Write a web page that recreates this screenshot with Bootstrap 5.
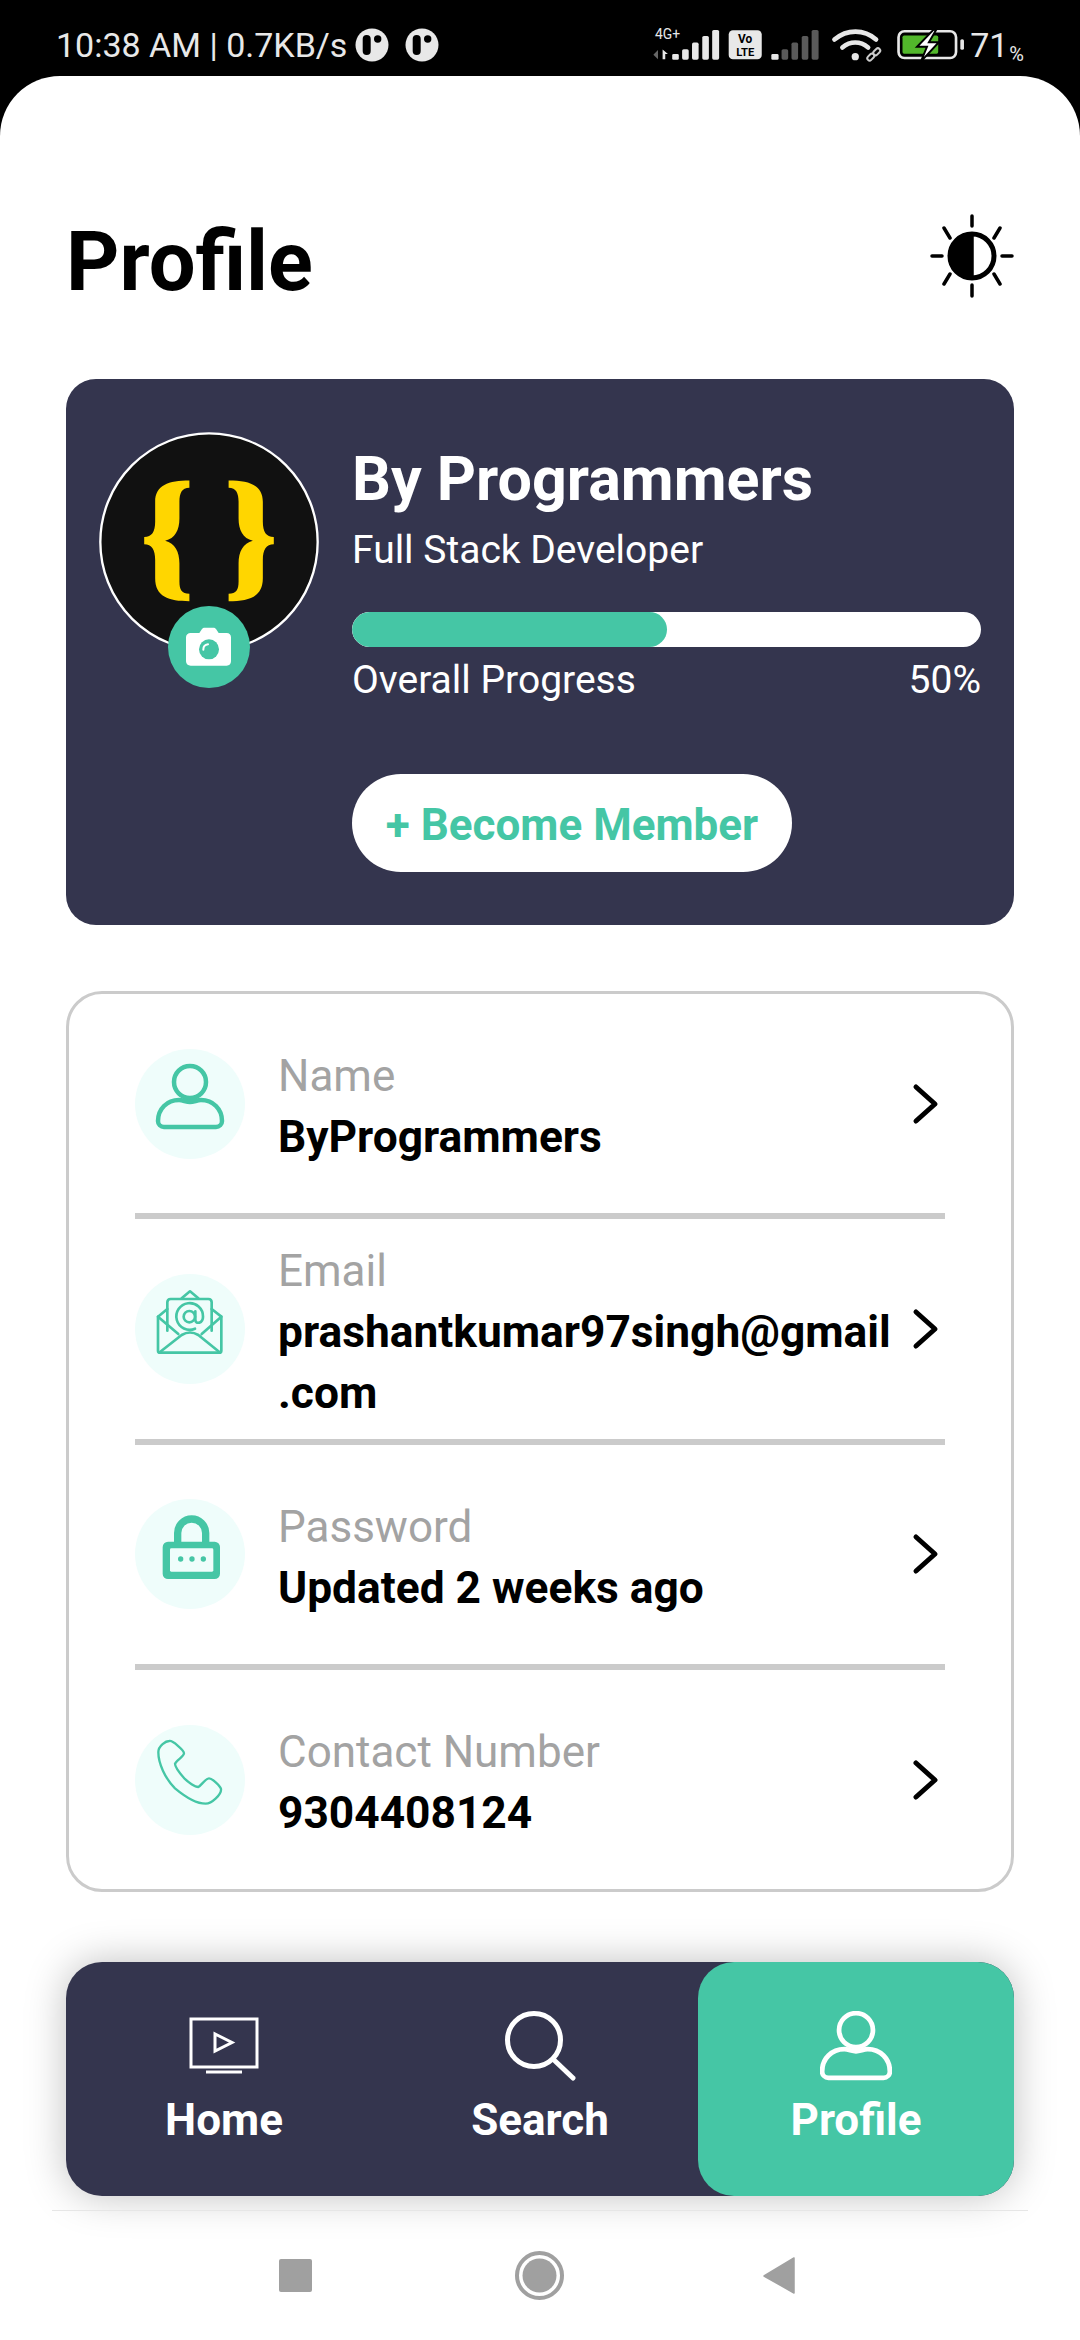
<!DOCTYPE html>
<html lang="en">

<head>
   <meta charset="UTF-8">
   <title>Profile</title>
   <link href="https://cdn.jsdelivr.net/npm/bootstrap@5.3.0/dist/css/bootstrap.min.css" rel="stylesheet">
   <style>
      body {
         width: 1080px;
         height: 2340px;
         background: #000;
         font-family: Roboto, "Liberation Sans", sans-serif;
         overflow: hidden;
      }

      .status-strip {
         height: 76px;
         padding: 14px 56px 0;
         color: #e8e8e8;
         font-size: 34px;
         line-height: 1;
      }

      .status-pct {
         font-size: 20px;
         margin-left: 1px;
         align-self: flex-end;
      }

      .sheet {
         height: 2264px;
         background: #fff;
         border-radius: 60px 60px 0 0;
         padding: 0 66px;
      }

      .page-head {
         padding: 139px 0 70px 0;
      }

      .page-title {
         font-size: 83px;
         line-height: 94px;
         font-weight: 700;
         color: #000;
         margin: 0;
      }

      .sun-icon {
         margin-top: -1px;
      }

      .hero-card {
         height: 546px;
         background: #34354e;
         border-radius: 30px;
         padding: 53px 33px 0;
         color: #fff;
      }

      .avatar-wrap {
         width: 220px;
         height: 220px;
      }

      .camera-badge {
         left: 69px;
         top: 174px;
         width: 82px;
         height: 82px;
      }

      .hero-info {
         margin-left: 33px;
         margin-top: 13px;
      }

      .hero-name {
         font-size: 61px;
         line-height: 68px;
         font-weight: 700;
      }

      .hero-sub {
         font-size: 39px;
         line-height: 50px;
         margin-top: 12px;
      }

      .hero-bar {
         height: 35px;
         margin-top: 37px;
         background: #fff;
         border-radius: 18px;
      }

      .hero-bar .progress-bar {
         background: #45c6a5;
         border-radius: 18px;
      }

      .hero-progress {
         font-size: 39px;
         line-height: 50px;
         margin-top: 8px;
      }

      .member-btn {
         width: 440px;
         height: 98px;
         margin-top: 69px;
         background: #fff;
         color: #45c6a5;
         font-size: 44px;
         font-weight: 700;
         border: 0;
         padding: 3px 0 0;
      }

      .info-box {
         height: 901px;
         margin-top: 66px;
         border: 3px solid #cbcbcb;
         border-radius: 36px;
         padding: 0 66px;
      }

      .info-row {
         height: 225.3px;
         border-bottom: 6px solid #cbcbcb;
      }

      .info-row:last-child {
         border-bottom: 0;
         padding-bottom: 6px;
      }

      .info-icon {
         width: 110px;
         height: 110px;
         flex: none;
      }

      .info-text {
         width: 620px;
         margin-left: 33px;
         margin-top: 7px;
         line-height: 61px;
         font-size: 44px;
         flex: none;
      }

      .info-label {
         color: #a3a3a3;
      }

      .info-value {
         color: #000;
         font-weight: 700;
         font-size: 44.3px;
      }

      .tab-bar {
         height: 234px;
         margin-top: 70px;
         background: #34354e;
         border-radius: 36px;
         box-shadow: 0 0 40px rgba(0, 0, 0, .25);
      }

      .tab-item {
         width: 316px;
         padding-top: 49px;
         color: #fff;
         font-size: 44px;
         font-weight: 700;
         line-height: 50px;
         border-radius: 36px;
      }

      .tab-item.is-active {
         background: #45c6a5;
      }

      .tab-label {
         margin-top: 14px;
      }

      .sys-bar {
         height: 130px;
         margin: 14px -14px 0;
         border-top: 1.5px solid #e6e6e6;
         gap: 201px;
         padding-right: 6px;
      }

      .sys-home {
         margin: 0 -2px 0 2px;
      }
   </style>
</head>

<body>

   <div class="status-strip d-flex align-items-center justify-content-between">
      <div class="d-flex align-items-center">
         <span>10:38 AM | 0.7KB/s</span>
         <svg class="ms-2" width="34" height="34" viewBox="0 0 34 34">
            <circle cx="17" cy="17" r="16.500" fill="#e8e8e8" />
            <path d="M11.700 11v12" stroke="#000" stroke-width="8" stroke-linecap="round" />
            <circle cx="22.700" cy="11" r="3.700" fill="#000" />
         </svg>
         <svg class="ms-3" width="34" height="34" viewBox="0 0 34 34">
            <circle cx="17" cy="17" r="16.500" fill="#e8e8e8" />
            <path d="M11.700 11v12" stroke="#000" stroke-width="8" stroke-linecap="round" />
            <circle cx="22.700" cy="11" r="3.700" fill="#000" />
         </svg>
      </div>
      <div class="d-flex align-items-center">
         <svg class="me-1" width="315" height="38" viewBox="85 85 945 115">
            <text x="93" y="125" font-size="42" fill="#e8e8e8" font-family="Roboto">4G+</text>
            <path d="M88 172l14-14v28z" fill="#666" />
            <path d="M116 156l16 14h-8v16h-8z" fill="#e8e8e8" />
            <g fill="#e8e8e8">
               <rect x="145" y="170" width="20" height="17" rx="4" />
               <rect x="175" y="155" width="20" height="32" rx="5" />
               <rect x="205" y="135" width="20" height="52" rx="5" />
               <rect x="236" y="115" width="20" height="72" rx="5" />
               <rect x="266" y="97" width="21" height="90" rx="5" />
            </g>
            <rect x="316" y="98" width="100" height="88" rx="13" fill="#e8e8e8" />
            <text x="366" y="135" font-size="36" font-weight="700" text-anchor="middle" font-family="Roboto">Vo</text>
            <text x="366" y="177" font-size="34" font-weight="700" text-anchor="middle" font-family="Roboto">LTE</text>
            <rect x="445" y="170" width="22" height="17" rx="4" fill="#e8e8e8" />
            <g fill="#5a5a5a">
               <rect x="476" y="155" width="20" height="32" rx="5" />
               <rect x="506" y="135" width="20" height="52" rx="5" />
               <rect x="537" y="115" width="20" height="72" rx="5" />
               <rect x="567" y="97" width="21" height="90" rx="5" />
            </g>
            <g fill="none" stroke="#e8e8e8" stroke-width="14" stroke-linecap="round">
               <path d="M636 126c38-32 90-32 126 0" />
               <path d="M660 150c24-20 54-20 78 0" />
            </g>
            <circle cx="699" cy="178" r="11" fill="#e8e8e8" />
            <g fill="none" stroke="#ccc" stroke-width="6">
               <rect x="734" y="172" width="24" height="14" rx="7" transform="rotate(-45 746 179)" />
               <rect x="752" y="156" width="24" height="14" rx="7" transform="rotate(-45 764 163)" />
            </g>
            <rect x="830" y="101" width="174" height="81" rx="18" fill="none" stroke="#e8e8e8" stroke-width="8" />
            <rect x="842" y="114" width="108" height="55" rx="5" fill="#52b72b" />
            <path d="M936 96l-50 52h30l-18 44 54-58h-30l22-38z" fill="#fff" stroke="#000" stroke-width="6" />
            <rect x="1017" y="125" width="11" height="32" rx="5" fill="#e8e8e8" />
         </svg>
         <span>71</span><span class="status-pct">%</span>
      </div>
   </div>

   <div class="sheet">
      <div class="page-head d-flex justify-content-between align-items-start">
         <h1 class="page-title">Profile</h1>
         <svg class="sun-icon" width="84" height="84" viewBox="930 213 84 84" fill="none" stroke="#000" stroke-width="3.500" stroke-linecap="round">
            <circle cx="972" cy="255" r="22" stroke-width="5" />
            <path d="M972 233a22 22 0 0 0 0 44z" fill="#000" />
            <path d="M972 215v10M972 284v11M932 255h10M1002 255h10M944 227l6 10M1000 227l-6 10M944 283l6-10M1000 283l-6-10" />
         </svg>
      </div>

      <div class="hero-card d-flex align-items-start">
         <div class="avatar-wrap position-relative flex-shrink-0">
            <svg width="220" height="220" viewBox="56 40 662 662">
               <circle cx="387" cy="371" r="327" fill="#111" stroke="#fff" stroke-width="7" />
               <g fill="#ffd600">
                  <path id="brace" d="M328 186V208C305 208 298 225 298 250V300C298 335 285 360 255 367C285 375 298 400 298 435V490C298 515 305 527 328 527V549C265 549 225 535 225 480V425C225 395 215 378 192 378V356C215 356 225 340 225 310V250C225 200 265 186 328 186Z" />
                  <use href="#brace" transform="translate(774 0) scale(-1 1)" />
               </g>
            </svg>
            <svg class="camera-badge position-absolute" viewBox="264 559 246 246">
               <circle cx="387" cy="682" r="123" fill="#45c6a5" />
               <path d="M332 640h26l8-12c2-3 5-4 8-4h26c3 0 6 1 8 4l8 12h24c8 0 13 5 13 13v72c0 8-5 13-13 13H332c-8 0-14-5-14-13v-72c0-8 6-13 14-13z" fill="#fff" />
               <circle cx="387" cy="689" r="30" fill="#45c6a5" />
               <path d="M370 690c0-9 6-15 14-16" fill="none" stroke="#fff" stroke-width="6" stroke-linecap="round" />
            </svg>
         </div>
         <div class="hero-info flex-grow-1">
            <div class="hero-name">By Programmers</div>
            <div class="hero-sub">Full Stack Developer</div>
            <div class="progress hero-bar">
               <div class="progress-bar" style="width: 50%"></div>
            </div>
            <div class="hero-progress d-flex justify-content-between">
               <span>Overall Progress</span>
               <span>50%</span>
            </div>
            <button class="btn member-btn rounded-pill">+ Become Member</button>
         </div>
      </div>

      <div class="info-box">
         <div class="info-row d-flex align-items-center">
            <svg class="info-icon" viewBox="0 0 110 110">
               <circle cx="55" cy="55" r="55" fill="#effdfb" />
               <g fill="none" stroke="#45c6a5" stroke-width="4.500">
                  <circle cx="55" cy="33" r="16" />
                  <path d="M29 78h52a6 6 0 0 0 6-6c0-12-9-21-21-21-4 0-7 2-11 2s-7-2-11-2c-12 0-21 9-21 21a6 6 0 0 0 6 6z" />
               </g>
            </svg>
            <div class="info-text">
               <div class="info-label">Name</div>
               <div class="info-value">ByProgrammers</div>
            </div>
            <svg class="ms-auto me-1" width="30" height="42" viewBox="0 0 30 42" fill="none" stroke="#000" stroke-width="5" stroke-linecap="round" stroke-linejoin="round">
               <path d="M5 4l19 17L5 38" />
            </svg>
         </div>

         <div class="info-row d-flex align-items-center">
            <svg class="info-icon" viewBox="0 0 330 330">
               <circle cx="165" cy="165" r="165" fill="#effdfb" />
               <g fill="none" stroke="#45c6a5" stroke-width="8" stroke-linecap="round" stroke-linejoin="round">
                  <path d="M97 105L69 128V230Q69 236 75 236H253Q259 236 259 230V128L230 105" />
                  <path d="M97 170V85Q97 75 107 75H220Q230 75 230 85V170" />
                  <path d="M140 73L165 52L190 73" />
                  <path d="M69 128L130 180M259 128L200 180M75 234L140 183Q165 168 190 183L253 234" />
                  <circle cx="163" cy="128" r="17" />
                  <path d="M181 112V136Q181 148 193 146Q204 142 204 128A40 40 0 1 0 180 164" />
               </g>
            </svg>
            <div class="info-text">
               <div class="info-label">Email</div>
               <div class="info-value">prashantkumar97singh@gmail<wbr>.com</div>
            </div>
            <svg class="ms-auto me-1" width="30" height="42" viewBox="0 0 30 42" fill="none" stroke="#000" stroke-width="5" stroke-linecap="round" stroke-linejoin="round">
               <path d="M5 4l19 17L5 38" />
            </svg>
         </div>

         <div class="info-row d-flex align-items-center">
            <svg class="info-icon" viewBox="0 0 330 330">
               <circle cx="165" cy="165" r="165" fill="#effdfb" />
               <path d="M128 135V102a42 42 0 0 1 84 0V135" fill="none" stroke="#45c6a5" stroke-width="22" />
               <rect x="83" y="128" width="172" height="112" rx="16" fill="#45c6a5" />
               <rect x="105" y="148" width="130" height="70" rx="4" fill="#effdfb" />
               <g fill="#45c6a5">
                  <circle cx="137" cy="180" r="8" />
                  <circle cx="171" cy="180" r="8" />
                  <circle cx="205" cy="180" r="8" />
               </g>
            </svg>
            <div class="info-text">
               <div class="info-label">Password</div>
               <div class="info-value">Updated 2 weeks ago</div>
            </div>
            <svg class="ms-auto me-1" width="30" height="42" viewBox="0 0 30 42" fill="none" stroke="#000" stroke-width="5" stroke-linecap="round" stroke-linejoin="round">
               <path d="M5 4l19 17L5 38" />
            </svg>
         </div>

         <div class="info-row d-flex align-items-center">
            <svg class="info-icon" viewBox="0 0 330 330">
               <circle cx="165" cy="165" r="165" fill="#effdfb" />
               <path d="M103 48C93 48 70 62 70 82C70 115 90 160 120 190C150 215 185 236 212 236C230 236 260 208 258 192C256 183 232 160 222 160C212 160 200 180 190 186C180 186 160 172 148 160C135 145 120 128 120 116C125 105 147 95 147 85C147 76 113 46 103 48Z" fill="none" stroke="#45c6a5" stroke-width="7" stroke-linejoin="round" />
            </svg>
            <div class="info-text">
               <div class="info-label">Contact Number</div>
               <div class="info-value">9304408124</div>
            </div>
            <svg class="ms-auto me-1" width="30" height="42" viewBox="0 0 30 42" fill="none" stroke="#000" stroke-width="5" stroke-linecap="round" stroke-linejoin="round">
               <path d="M5 4l19 17L5 38" />
            </svg>
         </div>
      </div>

      <div class="tab-bar d-flex">
         <div class="tab-item d-flex flex-column align-items-center">
            <svg width="72" height="70" viewBox="0 0 72 70" fill="none" stroke="#fff" stroke-width="3">
               <rect x="3" y="8" width="66" height="48" />
               <path d="M27 23v17l17-8.500z" />
               <path d="M18 61h36" />
            </svg>
            <div class="tab-label">Home</div>
         </div>
         <div class="tab-item d-flex flex-column align-items-center">
            <svg width="72" height="70" viewBox="0 0 72 70" fill="none" stroke="#fff" stroke-width="5" stroke-linecap="round">
               <circle cx="30" cy="29" r="26.500" />
               <path d="M50 49l19 18" />
            </svg>
            <div class="tab-label">Search</div>
         </div>
         <div class="tab-item is-active d-flex flex-column align-items-center">
            <svg width="72" height="70" viewBox="21 15 68 66" fill="none" stroke="#fff" stroke-width="4.500">
               <circle cx="55" cy="33" r="16" />
               <path d="M29 78h52a6 6 0 0 0 6-6c0-12-9-21-21-21-4 0-7 2-11 2s-7-2-11-2c-12 0-21 9-21 21a6 6 0 0 0 6 6z" />
            </svg>
            <div class="tab-label">Profile</div>
         </div>
      </div>

      <div class="sys-bar d-flex align-items-center justify-content-center">
         <svg width="33" height="33" viewBox="0 0 33 33">
            <rect width="33" height="33" rx="2" fill="#a0a0a0" />
         </svg>
         <svg class="sys-home" width="49" height="49" viewBox="0 0 49 49">
            <circle cx="24.500" cy="24.500" r="22.500" fill="none" stroke="#a0a0a0" stroke-width="4" />
            <circle cx="24.500" cy="24.500" r="17" fill="#a0a0a0" />
         </svg>
         <svg width="32" height="37" viewBox="0 0 32 37">
            <path d="M31 1v35L1 19z" fill="#a0a0a0" stroke="#a0a0a0" stroke-width="1.500" stroke-linejoin="round" />
         </svg>
      </div>
   </div>

   <script src="https://cdn.jsdelivr.net/npm/bootstrap@5.3.0/dist/js/bootstrap.bundle.min.js"></script>

</body>

</html>
